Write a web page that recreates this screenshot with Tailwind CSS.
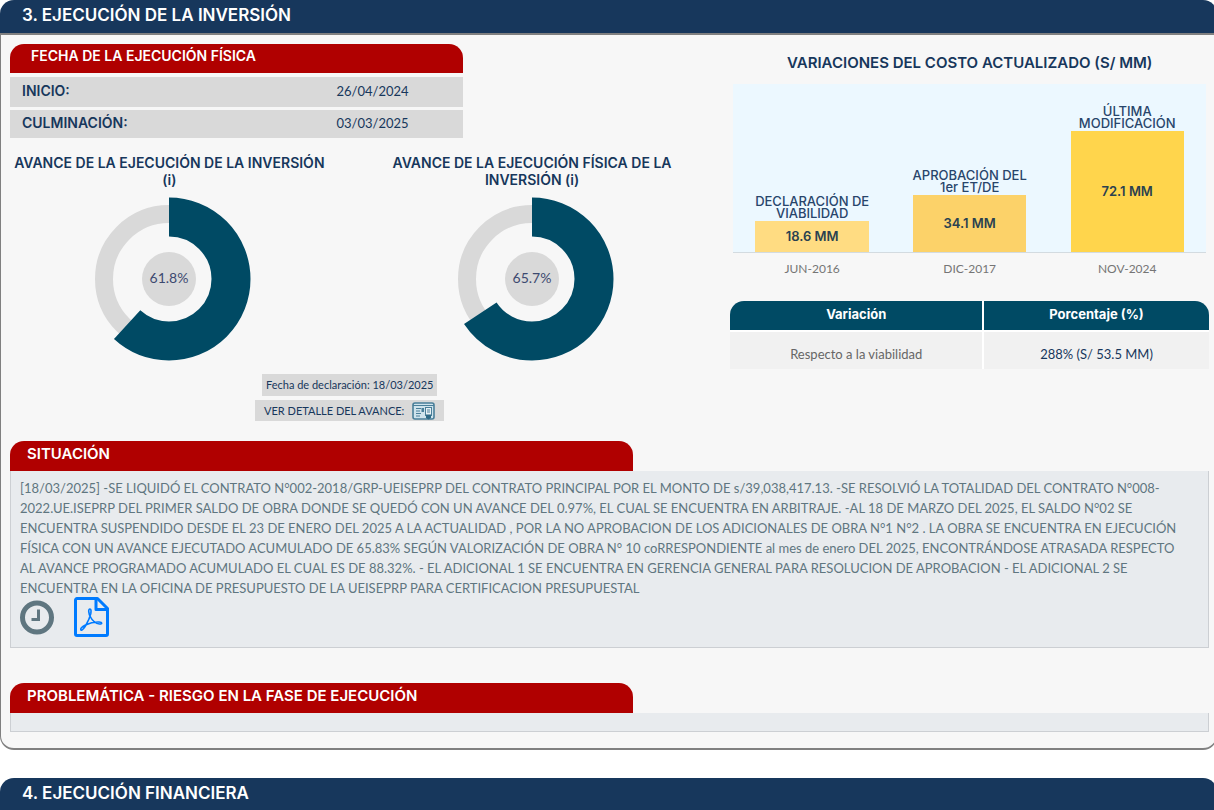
<!DOCTYPE html>
<html lang="es">
<head>
<meta charset="utf-8">
<meta name="viewport" content="width=device-width, initial-scale=1">
<title>Ejecución de la inversión</title>
<script src="https://cdn.jsdelivr.net/npm/@tailwindcss/browser@4"></script>
</head>
<body class="bg-white overflow-x-hidden font-['Lato',sans-serif] text-[13px] text-[#17375c]">
<main class="-mr-[3px]">
  <section>
    <h2 class="h-[33px] rounded-t-[14px] bg-[#17375c] pl-[22px] pt-[3px] font-['Inter',sans-serif] text-[17px] leading-6 font-semibold text-white">3. EJECUCIÓN DE LA INVERSIÓN</h2>
    <div class="rounded-b-[14px] border border-y-2 border-[#808080] bg-[#f7f7f7] pt-[9px] pb-4 pl-[9px] pr-[7px]">
      <div class="grid grid-cols-[3fr_2fr]">
        <div class="pr-10">
          <div class="mr-[-40px]">
            <h3 class="h-[29px] w-[63%] rounded-t-[14px] bg-[#b00000] pl-[21px] pt-[2px] font-['Inter',sans-serif] text-[14px] leading-5 font-semibold text-white">FECHA DE LA EJECUCIÓN FÍSICA</h3>
            <table class="mt-1 w-[63%] table-fixed border-separate border-spacing-0 leading-5">
              <tbody>
                <tr class="h-[33px] bg-[#d9d9d9]">
                  <th scope="row" class="w-[60%] border-b-3 border-[#f7f7f7] pb-[2px] pl-3 text-left align-middle font-['Inter',sans-serif] text-[14px] font-semibold">INICIO:</th>
                  <td class="border-b-3 border-[#f7f7f7] pb-[2px] text-center">26/04/2024</td>
                </tr>
                <tr class="h-[28px] bg-[#d9d9d9]">
                  <th scope="row" class="pb-[2px] pl-3 text-left align-middle font-['Inter',sans-serif] text-[14px] font-semibold">CULMINACIÓN:</th>
                  <td class="pb-[2px] text-center">03/03/2025</td>
                </tr>
              </tbody>
            </table>
          </div>
          <div class="-mr-[2px] mt-4 grid grid-cols-2 gap-11 text-center font-['Inter',sans-serif] text-[14px] leading-[17px] font-semibold">
            <figure class="flex flex-col items-center">
              <figcaption class="whitespace-nowrap">AVANCE DE LA EJECUCIÓN DE LA INVERSIÓN<br>(i)</figcaption>
              <svg class="mt-2 h-[166px] w-[166px]" viewBox="-83 -83 166 166" role="img" aria-label="61.8%">
                <circle r="65" fill="none" stroke="#d9d9d9" stroke-width="18"/>
                <circle r="62" fill="none" stroke="#004a64" stroke-width="39" pathLength="100" stroke-dasharray="61.8 38.2" transform="rotate(-90)"/>
                <circle r="27" fill="#d9d9d9"/>
                <text y="4" text-anchor="middle" class="fill-[#3d4a70] font-['Lato',sans-serif] text-[14px] font-normal">61.8%</text>
              </svg>
            </figure>
            <figure class="flex flex-col items-center">
              <figcaption class="whitespace-nowrap">AVANCE DE LA EJECUCIÓN FÍSICA DE LA<br>INVERSIÓN (i)</figcaption>
              <svg class="mt-2 h-[166px] w-[166px]" viewBox="-83 -83 166 166" role="img" aria-label="65.7%">
                <circle r="65" fill="none" stroke="#d9d9d9" stroke-width="18"/>
                <circle r="62" fill="none" stroke="#004a64" stroke-width="39" pathLength="100" stroke-dasharray="65.7 34.3" transform="rotate(-90)"/>
                <circle r="27" fill="#d9d9d9"/>
                <text y="4" text-anchor="middle" class="fill-[#3d4a70] font-['Lato',sans-serif] text-[14px] font-normal">65.7%</text>
              </svg>
            </figure>
          </div>
          <div class="mt-3 flex flex-col items-center gap-1 text-[11px]">
            <p class="flex h-[22px] items-center bg-[#d9d9d9] px-1">Fecha de declaración: 18/03/2025</p>
            <p class="flex h-[21px] items-center gap-2 bg-[#d9d9d9] px-[9px] pt-px">VER DETALLE DEL AVANCE:
              <button type="button" aria-label="Ver detalle del avance">
                <svg class="h-[18px] w-[23px]" viewBox="0 0 23 18" fill="none" stroke="#4a7f99">
                  <rect x="1" y="1" width="21" height="16" rx="2" fill="#cfe3ec" stroke-width="1.6"/>
                  <path d="M1 3.500h21" stroke-width="1"/>
                  <path d="M4 6.500h5M4 9h4M4 11.500h5M4 14h4" stroke-width="1"/>
                  <rect x="9.500" y="6" width="2.500" height="4" fill="#4a7f99" stroke="none"/>
                  <rect x="13.500" y="5.500" width="6" height="8" fill="#e8f1f5"/>
                  <path d="M15 8h3M15 10h3" stroke-width="1"/>
                  <path d="M14 12.500h5v3.500l-2.500 1.500-2.500-1.500z" fill="#2f6a86" stroke="none"/>
                </svg>
              </button>
            </p>
          </div>
        </div>
        <div class="pl-px">
          <figure class="font-['Inter',sans-serif]">
            <figcaption class="pt-[9px] text-center text-[15px] leading-5 font-semibold">VARIACIONES DEL COSTO ACTUALIZADO (S/ MM)</figcaption>
            <div class="mx-[3px] mt-[11px] grid h-[169px] grid-cols-3 border-b border-[#d3dbe0] bg-[#ecf8ff] text-center text-[13px] leading-3 font-medium text-[#28456b]">
              <div class="flex flex-col items-center justify-end">
                <p class="whitespace-nowrap pb-[2px]">DECLARACIÓN DE<br>VIABILIDAD</p>
                <div class="flex w-[72%] items-center justify-center bg-[#ffdc82] font-semibold text-[#2a4150]" style="height:18.6%">18.6 MM</div>
              </div>
              <div class="flex flex-col items-center justify-end">
                <p class="whitespace-nowrap pb-[2px]">APROBACIÓN DEL<br>1er ET/DE</p>
                <div class="flex w-[72%] items-center justify-center bg-[#fcd269] font-semibold text-[#2a4150]" style="height:34.1%">34.1 MM</div>
              </div>
              <div class="flex flex-col items-center justify-end">
                <p class="whitespace-nowrap pb-[2px]">ÚLTIMA<br>MODIFICACIÓN</p>
                <div class="flex w-[72%] items-center justify-center bg-[#ffd54c] font-semibold text-[#2a4150]" style="height:72.1%">72.1 MM</div>
              </div>
            </div>
            <div class="mx-[3px] mt-[6px] grid grid-cols-3 text-center font-['Lato',sans-serif] text-[12px] leading-5 text-[#757575]">
              <span>JUN-2016</span><span>DIC-2017</span><span>NOV-2024</span>
            </div>
          </figure>
          <table class="mt-[22px] w-full table-fixed border-separate border-spacing-0 text-center">
            <thead>
              <tr class="h-[31px] font-['Inter',sans-serif] text-white">
                <th scope="col" class="w-[53%] rounded-tl-[14px] border-r-2 border-b-2 border-white bg-[#004a64] pb-[2px] font-bold">Variación</th>
                <th scope="col" class="rounded-tr-[14px] border-b-2 border-white bg-[#004a64] pb-[2px] font-bold">Porcentaje (%)</th>
              </tr>
            </thead>
            <tbody>
              <tr class="h-[37px] bg-[#f1f1f1]">
                <td class="border-r-2 border-white pt-2 text-[#666666]">Respecto a la viabilidad</td>
                <td class="pt-2">288% (S/ 53.5 MM)</td>
              </tr>
            </tbody>
          </table>
        </div>
      </div>
      <h3 class="mt-5 h-[30px] w-[52%] rounded-t-[14px] bg-[#b00000] pl-[17px] pt-[3px] font-['Inter',sans-serif] text-[15px] leading-5 font-semibold text-white">SITUACIÓN</h3>
      <div class="border border-t-0 border-[#cccfd3] bg-[#e8ebee] px-[9px] pt-[7px] pb-[10px] text-[#5f7680]">
        <p class="leading-5">[18/03/2025] -SE LIQUIDÓ EL CONTRATO N°002-2018/GRP-UEISEPRP DEL CONTRATO PRINCIPAL POR EL MONTO DE s/39,038,417.13. -SE RESOLVIÓ LA TOTALIDAD DEL CONTRATO N°008-<br>2022.UE.ISEPRP DEL PRIMER SALDO DE OBRA DONDE SE QUEDÓ CON UN AVANCE DEL 0.97%, EL CUAL SE ENCUENTRA EN ARBITRAJE. -AL 18 DE MARZO DEL 2025, EL SALDO N°02 SE<br>ENCUENTRA SUSPENDIDO DESDE EL 23 DE ENERO DEL 2025 A LA ACTUALIDAD , POR LA NO APROBACION DE LOS ADICIONALES DE OBRA N°1 N°2 . LA OBRA SE ENCUENTRA EN EJECUCIÓN<br>FÍSICA CON UN AVANCE EJECUTADO ACUMULADO DE 65.83% SEGÚN VALORIZACIÓN DE OBRA N° 10 coRRESPONDIENTE al mes de enero DEL 2025, ENCONTRÁNDOSE ATRASADA RESPECTO<br>AL AVANCE PROGRAMADO ACUMULADO EL CUAL ES DE 88.32%. - EL ADICIONAL 1 SE ENCUENTRA EN GERENCIA GENERAL PARA RESOLUCION DE APROBACION - EL ADICIONAL 2 SE<br>ENCUENTRA EN LA OFICINA DE PRESUPUESTO DE LA UEISEPRP PARA CERTIFICACION PRESUPUESTAL</p>
        <div class="-mt-px flex items-center gap-5">
          <button type="button" aria-label="Historial">
            <svg class="h-[35px] w-[34px]" viewBox="0 0 34 34" fill="none" stroke="#5f7680">
              <circle cx="17" cy="17" r="14.500" stroke-width="5"/>
              <path d="M18.500 9v10h-7" stroke-width="3"/>
            </svg>
          </button>
          <a href="#documento" aria-label="Documento PDF">
            <svg class="h-10 w-[35px]" viewBox="0 0 35 40" fill="none" stroke="#007bff" stroke-linejoin="round" stroke-linecap="round">
              <path d="M1.500 3a1.500 1.500 0 0 1 1.500-1.500h20.500l10 10V37a1.500 1.500 0 0 1-1.500 1.500H3A1.500 1.500 0 0 1 1.500 37z" stroke-width="3"/>
              <path d="M22 2v10.500h11" stroke-width="3"/>
              <path d="M16 12C14 12 14.500 16.500 16.500 20C18.500 24 21.500 26.500 25.500 27C28.500 27.300 28.500 25.200 25 25C20.500 24.800 15.500 26 11.500 28C8.500 29.500 6.300 31.500 6.800 32.800C7.500 34.200 10 31.500 12 28C14 24.500 16 20 16.800 16.500C17.300 13.500 17 12 16 12Z" stroke-width="1.600"/>
            </svg>
          </a>
        </div>
      </div>
      <h3 class="mt-[35px] h-[30px] w-[52%] rounded-t-[14px] bg-[#b00000] pl-[17px] pt-[3px] font-['Inter',sans-serif] text-[15px] leading-5 font-semibold text-white">PROBLEMÁTICA - RIESGO EN LA FASE DE EJECUCIÓN</h3>
      <div class="border border-t-0 border-[#cccfd3] bg-[#e8ebee] py-[9px]"></div>
    </div>
  </section>
  <section class="mt-7">
    <h2 class="h-8 rounded-t-[14px] bg-[#17375c] pl-[22px] pt-[3px] font-['Inter',sans-serif] text-[17px] leading-6 font-semibold text-white">4. EJECUCIÓN FINANCIERA</h2>
  </section>
</main>
</body>
</html>
